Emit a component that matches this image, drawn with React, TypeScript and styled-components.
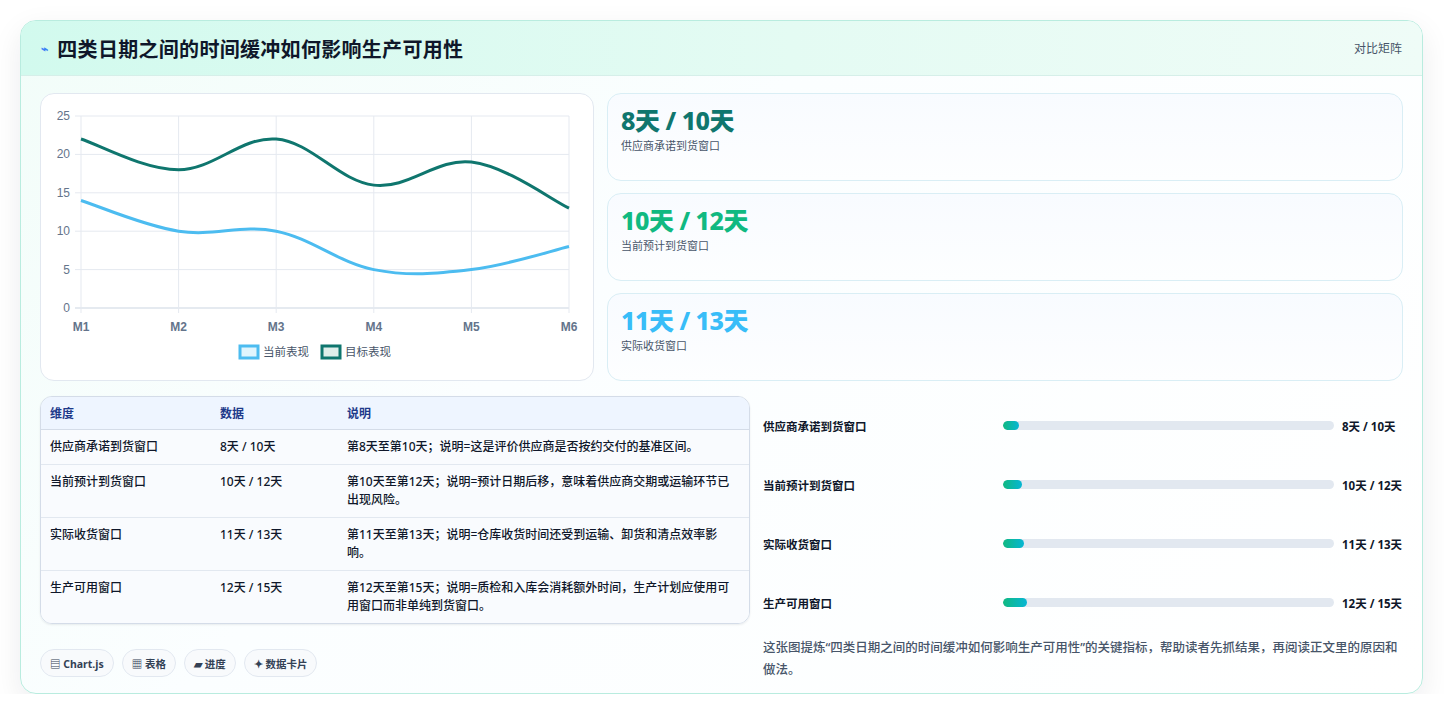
import React from "react";
import styled, { createGlobalStyle } from "styled-components";

const G = createGlobalStyle`
  body{margin:0;background:#fff;font-family:"Noto Sans","Noto Sans CJK SC",sans-serif;color:#0f172a;}
`;
const Page = styled.div`padding:20px 20px 0 20px;`;
const Card = styled.div`width:1403px;height:674px;box-sizing:border-box;border:1px solid #b9ecdf;border-radius:16px;
  background:linear-gradient(135deg,#f2fdf9,#fbfeff 40%,#ffffff);box-shadow:0 10px 30px rgba(15,23,42,.08);overflow:hidden;`;
const Header = styled.div`height:55px;box-sizing:border-box;display:flex;align-items:center;justify-content:space-between;
  padding:0 20px 0 20px;background:linear-gradient(90deg,#d2faee,#e4fbf3 55%,#effcf7);border-bottom:1px solid #d6efe9;`;
const Title = styled.h1`margin:0;font-size:20px;font-weight:700;display:flex;align-items:center;gap:9px;color:#0f172a;letter-spacing:0.3px;`;
const Tag = styled.span`font-size:12px;color:#475569;`;
const Body = styled.div`padding:17px 19px 0 19px;display:flex;flex-direction:column;`;
const TopRow = styled.div`display:grid;grid-template-columns:554px 1fr;gap:13px;`;
const Panel = styled.div`border:1px solid #e2e8f0;border-radius:14px;background:#fff;`;
const ChartBox = styled(Panel)`height:288px;box-sizing:border-box;`;
const Stats = styled.div`display:flex;flex-direction:column;gap:12px;`;
const Stat = styled.div`height:88px;box-sizing:border-box;border:1px solid #d9eef5;border-radius:14px;
  background:linear-gradient(180deg,#f8fbff,#fdfeff);padding:10px 13px;`;
const StatVal = styled.div<{c:string}>`font-size:25px;font-weight:800;color:${p=>p.c};line-height:32px;letter-spacing:-0.5px;`;
const StatLbl = styled.div`font-size:11px;color:#475569;margin-top:1px;`;
const BottomRow = styled.div`display:grid;grid-template-columns:710px 1fr;gap:13px;margin-top:15px;`;
const Left = styled.div`display:flex;flex-direction:column;`;
const Table = styled.table`width:100%;border-collapse:separate;border-spacing:0;border:1px solid #d4dce8;border-radius:12px;overflow:hidden;font-size:12px;
  box-shadow:0 1px 2px rgba(15,23,42,.08);
  th{background:#eef5ff;color:#1e3a8a;text-align:left;font-weight:700;height:32px;padding:0 9px;border-bottom:1px solid #d4dce8;}
  td{padding:8px 12px 8px 9px;vertical-align:top;line-height:18px;background:#f9fbfe;color:#0f172a;font-weight:500;}
  tr td{height:18px;}
  tr:not(:last-child) td{border-bottom:1px solid #e2e8f0;}
`;
const Chips = styled.div`display:flex;gap:8px;margin-top:25px;`;
const Chip = styled.span`height:28px;box-sizing:border-box;display:inline-flex;align-items:center;padding:0 9px;border:1px solid #e2e8f0;border-radius:14px;
  background:#f8fafc;font-size:10.5px;font-weight:700;color:#334155;gap:3px;`;
const Right = styled.div`display:flex;flex-direction:column;`;
const PRow = styled.div`height:59px;display:grid;grid-template-columns:232px 331px 1fr;align-items:center;column-gap:8px;font-size:11.5px;font-weight:700;white-space:nowrap;`;
const Track = styled.div`height:9px;border-radius:5px;background:#e2e8f0;overflow:hidden;`;
const Fill = styled.div`height:100%;border-radius:5px;background:linear-gradient(90deg,#10b981,#06b6d4);`;
const Desc = styled.p`margin:5px 0 0;font-size:12.5px;line-height:22px;color:#475569;font-weight:500;padding-right:0;`;

const xs=[80,177.6,275.2,372.8,470.4,568];
const yv=(v:number)=>214-v*7.68;
function path(vals:number[]){
  const pts=vals.map((v,i)=>[xs[i]-40,yv(v)] as [number,number]);
  let d=`M${pts[0][0]},${pts[0][1]}`;
  for(let i=0;i<pts.length-1;i++){
    const p0=pts[i-1]||pts[i],p1=pts[i],p2=pts[i+1],p3=pts[i+2]||p2;
    const c1=[p1[0]+(p2[0]-p0[0])*0.18,p1[1]+(p2[1]-p0[1])*0.18];
    const c2=[p2[0]-(p3[0]-p1[0])*0.18,p2[1]-(p3[1]-p1[1])*0.18];
    d+=` C${c1[0]},${c1[1]} ${c2[0]},${c2[1]} ${p2[0]},${p2[1]}`;
  }
  return d;
}
function Chart(){
  const gy=[0,5,10,15,20,25];
  return(<svg width="552" height="286" viewBox="0 0 552 286" style={{display:"block"}}>
    {gy.map(v=><g key={v}><line x1={34} x2={528} y1={yv(v)} y2={yv(v)} stroke={v===0?"#cbd5e1":"#e5e9f0"}/>
      <text x={29} y={yv(v)+4} textAnchor="end" fontSize="12" fill="#64748b" fontFamily="Liberation Sans">{v}</text></g>)}
    {xs.map((x,i)=><g key={i}><line x1={x-40} x2={x-40} y1={yv(25)} y2={yv(0)+5} stroke="#e5e9f0"/>
      <text x={x-40} y={237} textAnchor="middle" fontSize="12" fontWeight="700" fill="#64748b" fontFamily="Liberation Sans">M{i+1}</text></g>)}
    <path d={path([22,18,22,16,19,13])} fill="none" stroke="#0f766e" strokeWidth="3"/>
    <path d={path([14,10,10,5,5,8])} fill="none" stroke="#4cbcf0" strokeWidth="3"/>
    <rect x={199} y={252} width={18} height={12} fill="#e0f5fd" stroke="#4cbcf0" strokeWidth="3"/>
    <text x={222} y={262} fontSize="11.5" fill="#475569">当前表现</text>
    <rect x={281} y={252} width={18} height={12} fill="#dfeeea" stroke="#0f766e" strokeWidth="3"/>
    <text x={304} y={262} fontSize="11.5" fill="#475569">目标表现</text>
  </svg>);
}
const rows=[["供应商承诺到货窗口","8天 / 10天","第8天至第10天；说明=这是评价供应商是否按约交付的基准区间。",16],
["当前预计到货窗口","10天 / 12天","第10天至第12天；说明=预计日期后移，意味着供应商交期或运输环节已出现风险。",19],
["实际收货窗口","11天 / 13天","第11天至第13天；说明=仓库收货时间还受到运输、卸货和清点效率影响。",21],
["生产可用窗口","12天 / 15天","第12天至第15天；说明=质检和入库会消耗额外时间，生产计划应使用可用窗口而非单纯到货窗口。",24]] as const;
export default function App(){
  return(<Page><G/><Card>
    <Header><Title><span style={{color:"#3b82f6",fontSize:12}}>⌁</span>四类日期之间的时间缓冲如何影响生产可用性</Title><Tag>对比矩阵</Tag></Header>
    <Body>
      <TopRow>
        <ChartBox><Chart/></ChartBox>
        <Stats>
          <Stat><StatVal c="#0f766e">8天 / 10天</StatVal><StatLbl>供应商承诺到货窗口</StatLbl></Stat>
          <Stat><StatVal c="#10b981">10天 / 12天</StatVal><StatLbl>当前预计到货窗口</StatLbl></Stat>
          <Stat><StatVal c="#38bdf8">11天 / 13天</StatVal><StatLbl>实际收货窗口</StatLbl></Stat>
        </Stats>
      </TopRow>
      <BottomRow>
        <Left>
          <Table><colgroup><col style={{width:170}}/><col style={{width:127}}/><col/></colgroup>
            <thead><tr><th>维度</th><th>数据</th><th>说明</th></tr></thead>
            <tbody>{rows.map(r=><tr key={r[0]}><td>{r[0]}</td><td>{r[1]}</td><td>{r[2]}</td></tr>)}</tbody>
          </Table>
          <Chips><Chip>▤ Chart.js</Chip><Chip>▦ 表格</Chip><Chip>▰ 进度</Chip><Chip>✦ 数据卡片</Chip></Chips>
        </Left>
        <Right>
          {rows.map(r=><PRow key={r[0]}><span>{r[0]}</span><Track><Fill style={{width:r[3]}}/></Track><span>{r[1]}</span></PRow>)}
          <Desc>这张图提炼“四类日期之间的时间缓冲如何影响生产可用性”的关键指标，帮助读者先抓结果，再阅读正文里的原因和做法。</Desc>
        </Right>
      </BottomRow>
    </Body>
  </Card></Page>);
}
